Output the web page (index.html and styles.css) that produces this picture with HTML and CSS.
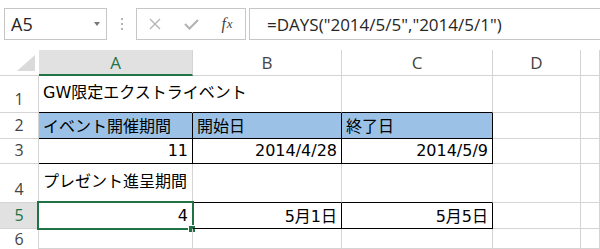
FILE: index.html
```html
<!DOCTYPE html>
<html lang="ja">
<head>
<meta charset="utf-8">
<title>DAYS</title>
<link rel="stylesheet" href="styles.css">
</head>
<body>
<div class="fbar">
  <div class="namebox"><span class="nb-text">A5</span><span class="nb-arrow"></span></div>
  <div class="grip">
    <svg width="4" height="16" viewBox="0 0 4 16"><circle cx="2" cy="3" r="1" fill="#9a9a9a"/><circle cx="2" cy="8" r="1" fill="#9a9a9a"/><circle cx="2" cy="13" r="1" fill="#9a9a9a"/></svg>
  </div>
  <div class="fbtns">
    <span class="slot"><svg width="12" height="12" viewBox="0 0 12 12"><path d="M1 1 L11 11 M11 1 L1 11" stroke="#b4b4b4" stroke-width="1.3" fill="none"/></svg></span>
    <span class="slot"><svg width="15" height="11" viewBox="0 0 15 11"><path d="M1 5 L5.5 9.5 L14 1" stroke="#b4b4b4" stroke-width="2.2" fill="none"/></svg></span>
    <span class="slot fx">f<span class="fx-x">x</span></span>
  </div>
  <div class="finput">=DAYS("2014/5/5","2014/5/1")</div>
</div>
<div class="sheet">
  <div class="h corner"><svg class="tri" width="20" height="18" viewBox="0 0 20 18"><polygon points="1,17 19,17 19,1" fill="#dadada"/></svg></div>
  <div class="h col act">A</div>
  <div class="h col">B</div>
  <div class="h col">C</div>
  <div class="h col">D</div>
  <div class="h col"></div>

  <div class="h row">1</div>
  <div class="c tall over bb">GW限定エクストライベント</div>
  <div class="c bb"></div>
  <div class="c bb"></div>
  <div class="c"></div>
  <div class="c"></div>

  <div class="h row">2</div>
  <div class="c hd br bb">イベント開催期間</div>
  <div class="c hd br bb">開始日</div>
  <div class="c hd br bb">終了日</div>
  <div class="c"></div>
  <div class="c"></div>

  <div class="h row">3</div>
  <div class="c num br bb">11</div>
  <div class="c num br bb">2014/4/28</div>
  <div class="c num br bb">2014/5/9</div>
  <div class="c"></div>
  <div class="c"></div>

  <div class="h row">4</div>
  <div class="c tall bb">プレゼント進呈期間</div>
  <div class="c bb"></div>
  <div class="c bb"></div>
  <div class="c"></div>
  <div class="c"></div>

  <div class="h row act">5</div>
  <div class="c num br bb selcell">4<span class="sel"></span><span class="handle"></span></div>
  <div class="c num br bb">5月1日</div>
  <div class="c num br bb">5月5日</div>
  <div class="c"></div>
  <div class="c"></div>

  <div class="h row last">6</div>
  <div class="c"></div>
  <div class="c"></div>
  <div class="c"></div>
  <div class="c"></div>
  <div class="c"></div>
</div>
</body>
</html>
```
FILE: styles.css
```css
html, body {
  margin: 0;
  padding: 0;
  background: #ffffff;
}
body {
  width: 600px;
  height: 249px;
  overflow: hidden;
}
* {
  box-sizing: border-box;
}

/* formula bar */
.fbar {
  display: flex;
  align-items: flex-start;
  height: 50px;
  padding-top: 8px;
}
.namebox {
  margin-left: 4px;
  width: 103px;
  height: 32px;
  border: 1px solid #c6c6c6;
  display: flex;
  align-items: center;
  padding-left: 6px;
  font-family: "Open Sans", "Noto Sans", sans-serif;
  font-size: 18px;
  color: #262626;
}
.nb-arrow {
  margin-left: auto;
  margin-right: 6px;
  width: 0;
  height: 0;
  border-left: 3.5px solid transparent;
  border-right: 3.5px solid transparent;
  border-top: 4px solid #777777;
}
.grip {
  width: 29px;
  height: 32px;
  display: flex;
  align-items: center;
  justify-content: center;
}
.fbtns {
  width: 110px;
  height: 32px;
  border: 1px solid #c6c6c6;
  display: flex;
  align-items: center;
}
.slot {
  width: 36px;
  height: 30px;
  display: flex;
  align-items: center;
  justify-content: center;
}
.fx {
  font-family: "Liberation Serif", serif;
  font-style: italic;
  font-size: 16px;
  color: #444444;
}
.fx-x {
  font-size: 13px;
  margin-left: 1px;
}
.finput {
  flex: 1;
  margin-left: 3px;
  margin-right: -2px;
  height: 32px;
  border: 1px solid #c6c6c6;
  display: flex;
  align-items: center;
  padding-left: 17px;
  font-family: "Open Sans", "Noto Sans", sans-serif;
  font-size: 17px;
  color: #262626;
  white-space: nowrap;
}

/* sheet */
.sheet {
  display: grid;
  grid-template-columns: 39px 154px 149px 151px 88px 1fr;
  grid-template-rows: 26px 37px 26px 25px 39px 26px 20px;
}
.h {
  border-right: 1px solid #d4d4d4;
  border-bottom: 1px solid #d4d4d4;
  display: flex;
  justify-content: center;
  font-family: "Open Sans", "Noto Sans", sans-serif;
  color: #444444;
}
.corner {
  position: relative;
  border-right: none;
}
.tri {
  position: absolute;
  left: 16px;
  top: 4px;
}
.col {
  align-items: center;
  font-size: 17px;
}
.col.act {
  background: #e1e1e1;
  color: #217346;
  border-bottom: 2px solid #217346;
}
.row {
  align-items: flex-end;
  font-size: 16px;
  line-height: 26px;
}
.row.last {
  align-items: center;
  line-height: 20px;
  border-bottom: none;
}
.row.act {
  background: #e1e1e1;
  color: #217346;
}
.c {
  position: relative;
  border-right: 1px solid #d4d4d4;
  border-bottom: 1px solid #d4d4d4;
  display: flex;
  align-items: center;
  padding: 0 4px 1px 4px;
  font-family: "DejaVu Sans", "Noto Sans CJK JP", sans-serif;
  font-size: 16px;
  color: #000000;
  white-space: nowrap;
}
.tall {
  padding-bottom: 6px;
}
.over {
  border-right-color: transparent;
  overflow: visible;
}
.hd {
  background: #9bc2e6;
}
.num {
  justify-content: flex-end;
}
.br {
  border-right-color: #000000;
}
.bb {
  border-bottom-color: #000000;
}
.sel {
  position: absolute;
  left: -2px;
  top: -2px;
  right: -2px;
  bottom: -2px;
  border: 2px solid #217346;
}
.handle {
  position: absolute;
  left: 149px;
  top: 22px;
  width: 8px;
  height: 8px;
  border: 1px solid #ffffff;
  background: #217346;
}
```
